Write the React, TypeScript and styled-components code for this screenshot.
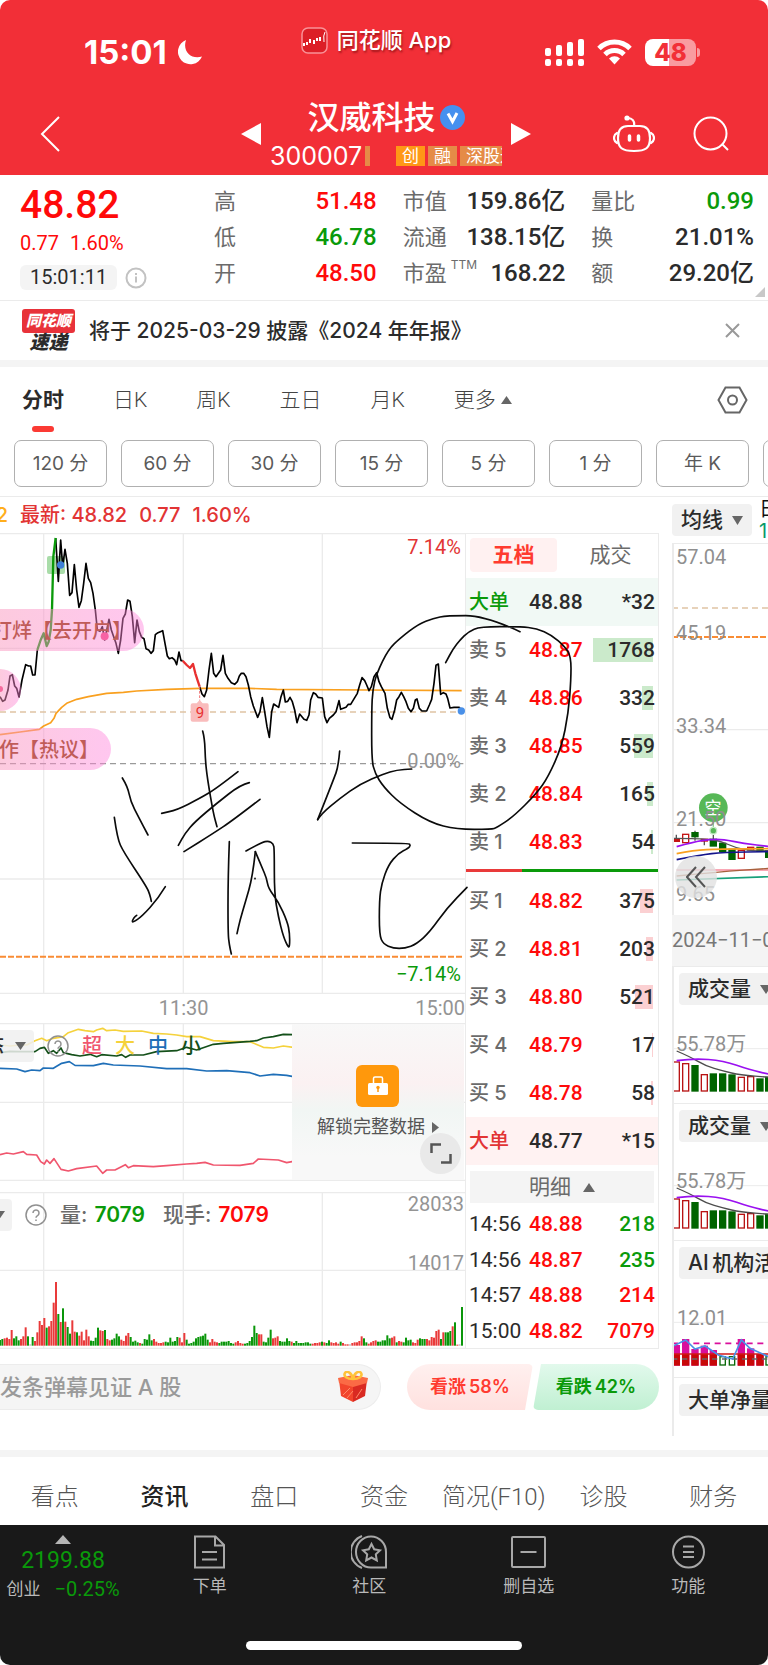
import React from 'react';
import styled, { createGlobalStyle, css } from 'styled-components';

const UI = `Inter, "Noto Sans CJK SC", sans-serif`;
const NUM = `Roboto, "Noto Sans CJK SC", sans-serif`;

const color = {
  brand: '#f22f37',
  up: '#ff0a0a',
  down: '#0a9a0a',
  ink: '#2b2b2b',
  mid: '#6b6b6b',
  soft: '#949494',
  line: '#ebebeb',
  band: '#f4f4f4',
};

const Global = createGlobalStyle`
  * { box-sizing: border-box; }
  body { margin: 0; background: #fff; font-family: ${UI}; color: ${color.ink}; }
  button { border: 0; padding: 0; background: none; font: inherit; color: inherit; cursor: pointer; }
  svg { display: block; flex: none; }
  table { border-collapse: collapse; }
  td, th { padding: 0; font-weight: 400; text-align: left; }
`;

const Page = styled.div`
  border-radius: 10px;
  overflow: hidden;
  background: #fff;
`;

/* ---------- header ---------- */

const Header = styled.header`
  background: ${color.brand};
  color: #fff;
`;

const StatusBar = styled.div`
  display: grid;
  grid-template-columns: 1fr auto 1fr;
  height: 80px;
`;

const StatusSide = styled.div<{ $end?: boolean }>`
  display: flex;
  align-items: center;
  gap: ${p => (p.$end ? 13 : 10)}px;
  justify-content: ${p => (p.$end ? 'flex-end' : 'flex-start')};
  padding: ${p => (p.$end ? '24px 68px 0 0' : '24px 0 0 84px')};
`;

const Clock = styled.span`
  font-size: 33px;
  line-height: 36px;
  font-weight: 700;
`;

const AppName = styled.div`
  display: flex;
  align-items: center;
  gap: 9px;
  padding-right: 16px;
  font-size: 22px;
  line-height: 28px;
  font-weight: 500;
  text-shadow: 1px 2px 2px rgba(90, 0, 0, 0.5);
  white-space: nowrap;
`;

const Battery = styled.div`
  position: relative;
  width: 51px;
  height: 27px;
  margin-right: 4px;
  border-radius: 8px;
  background: linear-gradient(90deg, #fff 48%, #f99ba0 48%);
  color: ${color.brand};
  font-size: 24px;
  line-height: 27px;
  font-weight: 800;
  text-align: center;
  &::after {
    content: '';
    position: absolute;
    right: -4px;
    top: 9px;
    width: 3px;
    height: 9px;
    border-radius: 0 3px 3px 0;
    background: #f99ba0;
  }
`;

const TitleBar = styled.div`
  display: grid;
  grid-template-columns: 1fr auto 1fr;
  align-items: center;
  height: 95px;
  padding-top: 12px;
`;

const BackButton = styled.button`
  justify-self: start;
  margin-left: 40px;
`;

const Switcher = styled.div`
  display: flex;
  align-items: center;
  gap: 9px;
  padding-left: 4px;
`;

const TitleColumn = styled.div`
  display: flex;
  flex-direction: column;
  gap: 8px;
  width: 232px;
`;

const StockName = styled.h1`
  display: flex;
  align-items: center;
  justify-content: center;
  gap: 4px;
  margin: 0;
  font-size: 32px;
  line-height: 36px;
  font-weight: 500;
`;

const CodeLine = styled.div`
  display: flex;
  align-items: center;
  gap: 3px;
  height: 24px;
  font-size: 25px;
  line-height: 24px;
`;

const Sliver = styled.span`
  width: 5px;
  height: 20px;
  background: #e58b47;
`;

const Tags = styled.div`
  display: flex;
  gap: 3px;
  width: 106px;
  margin-left: auto;
  padding-right: 2px;
  overflow: hidden;
`;

const Tag = styled.span<{ $bright?: boolean }>`
  flex: none;
  padding: 0 6px;
  background: ${p => (p.$bright ? '#ff9716' : '#e58b47')};
  font-size: 17px;
  line-height: 20px;
`;

const HeadActions = styled.div`
  display: flex;
  align-items: center;
  justify-content: flex-end;
  gap: 38px;
  padding-right: 39px;
`;

/* ---------- quote ---------- */

const Quote = styled.section`
  position: relative;
  display: grid;
  grid-template-columns: 194px 1fr;
  padding: 0 14px 0 20px;
  height: 126px;
  border-bottom: 1px solid ${color.line};
`;

const PriceBlock = styled.div`
  font-family: ${NUM};
  color: ${color.up};
`;

const Price = styled.div`
  margin-top: 6px;
  font-size: 39px;
  line-height: 48px;
  font-weight: 500;
`;

const Change = styled.div`
  display: flex;
  gap: 11px;
  font-size: 20px;
  line-height: 28px;
`;

const TimeLine = styled.div`
  display: flex;
  align-items: center;
  gap: 8px;
  margin-top: 8px;
`;

const TimePill = styled.time`
  padding: 0 10px;
  border-radius: 6px;
  background: ${color.band};
  color: ${color.ink};
  font-size: 20px;
  line-height: 25px;
`;

const Stats = styled.dl`
  display: grid;
  grid-template-columns: repeat(3, 1fr);
  grid-auto-rows: 36px;
  column-gap: 26px;
  margin: 0;
  padding-top: 8px;
`;

const Stat = styled.div`
  display: flex;
  justify-content: space-between;
  line-height: 36px;
  white-space: nowrap;
`;

const StatName = styled.dt`
  font-size: 22px;
  color: ${color.mid};
  sup { margin-left: 4px; font-size: 12px; line-height: 12px; vertical-align: 12px; }
`;

const StatValue = styled.dd<{ $c?: string }>`
  margin: 0;
  font-family: ${NUM};
  font-size: 24px;
  font-weight: 500;
  color: ${p => p.$c || color.ink};
`;

const Corner = styled.svg`
  position: absolute;
  right: 3px;
  bottom: 3px;
`;

/* ---------- notice ---------- */

const Notice = styled.section`
  display: flex;
  align-items: center;
  gap: 14px;
  height: 59px;
  padding: 0 28px 0 22px;
`;

const NoticeText = styled.p`
  flex: 1;
  margin: 0;
  font-size: 21px;
  line-height: 28px;
  font-weight: 500;
`;

const Express = styled.div`
  width: 53px;
  text-align: center;
  font-style: italic;
  font-weight: 900;
`;

const ExpressTop = styled.div`
  border-radius: 3px;
  background: #e8323a;
  color: #fff;
  font-size: 15px;
  line-height: 24px;
`;

const ExpressBottom = styled.div`
  font-size: 19px;
  line-height: 20px;
`;

const Band = styled.div`
  height: 7px;
  background: ${color.band};
`;

/* ---------- period tabs ---------- */

const Periods = styled.nav`
  display: flex;
  align-items: center;
  gap: 49px;
  height: 66px;
  padding: 0 20px 0 22px;
`;

const PeriodTab = styled.button<{ $on?: boolean }>`
  position: relative;
  display: flex;
  align-items: center;
  gap: 5px;
  height: 66px;
  font-family: ${NUM};
  font-size: 21px;
  line-height: 28px;
  font-weight: ${p => (p.$on ? 700 : 300)};
  color: ${p => (p.$on ? color.ink : '#444')};
  white-space: nowrap;
  ${p => p.$on && css`
    &::after {
      content: '';
      position: absolute;
      left: 10px;
      right: 10px;
      bottom: 1px;
      height: 6px;
      border-radius: 3px;
      background: #fb3a34;
    }
  `}
`;

const SettingsButton = styled.button`
  margin-left: auto;
`;

const Chips = styled.div`
  display: flex;
  gap: 14px;
  height: 64px;
  padding: 7px 0 0 14px;
  border-bottom: 1px solid ${color.line};
  overflow: hidden;
`;

const Chip = styled.button`
  flex: none;
  width: 93px;
  height: 47px;
  border: 1px solid #b0b0b0;
  border-radius: 7px;
  font-size: 19px;
  line-height: 28px;
  color: #5a5a5a;
`;

/* ---------- trading area ---------- */

const Trading = styled.main`
  display: grid;
  grid-template-columns: minmax(0, 1fr) 96px;
  gap: 13px;
  height: 953px;
`;

const Latest = styled.div`
  display: flex;
  gap: 12px;
  height: 36px;
  font-size: 20px;
  line-height: 36px;
  font-weight: 500;
  color: #e23434;
  span:first-child { width: 8px; direction: rtl; overflow: hidden; color: #ffae1c; }
`;

const Board = styled.div`
  position: relative;
  display: grid;
  grid-template-columns: minmax(0, 1fr) 194px;
`;

const ChartColumn = styled.div`
  display: flex;
  flex-direction: column;
`;

const ChartBox = styled.div<{ $h: number }>`
  position: relative;
  height: ${p => p.$h}px;
  overflow: hidden;
  & > svg { width: 100%; height: 100%; }
`;

const AxisLabel = styled.span<{ $top: number; $c?: string; $edge?: number }>`
  position: absolute;
  right: ${p => p.$edge ?? 4}px;
  top: ${p => p.$top}px;
  font-family: ${NUM};
  font-size: 20px;
  line-height: 24px;
  color: ${p => p.$c || color.soft};
`;

const TimeAxis = styled.div`
  display: grid;
  grid-template-columns: 79% 1fr;
  font-family: ${NUM};
  font-size: 20px;
  line-height: 29px;
  color: ${color.soft};
  span:first-child { text-align: center; }
  span:last-child { text-align: right; }
`;

const Bullet = styled.div<{ $top: number; $w: number }>`
  position: absolute;
  left: 0;
  top: ${p => p.$top}px;
  display: flex;
  justify-content: flex-end;
  width: ${p => p.$w}px;
  height: 42px;
  padding-right: 12px;
  border-radius: 0 21px 21px 0;
  background: linear-gradient(90deg, rgba(250, 150, 190, 0.5), rgba(255, 130, 220, 0.45));
  font-size: 20px;
  line-height: 44px;
  font-weight: 500;
  color: #c05c58;
  white-space: nowrap;
  overflow: hidden;
`;

const Legend = styled.div<{ $gap: number }>`
  position: absolute;
  left: 0;
  top: 7px;
  display: flex;
  align-items: center;
  gap: ${p => p.$gap}px;
  height: 32px;
  font-size: 20px;
  line-height: 32px;
  white-space: nowrap;
`;

const LegendPill = styled.button<{ $w: number }>`
  display: flex;
  align-items: center;
  justify-content: flex-end;
  gap: 11px;
  width: ${p => p.$w}px;
  height: 32px;
  padding-right: ${p => (p.$w > 20 ? 8 : 7)}px;
  border-radius: 0 4px 4px 0;
  background: rgba(240, 240, 240, 0.85);
  font-weight: 500;
  overflow: hidden;
`;

const Key = styled.span<{ $c: string }>`
  width: 20px;
  color: ${p => p.$c};
  font-weight: 500;
`;

const Figure = styled.span<{ $c: string }>`
  display: flex;
  gap: 7px;
  margin-right: 5px;
  color: ${color.mid};
  font-size: 21px;
  font-weight: 500;
  b { color: ${p => p.$c}; font-weight: 600; }
`;

const Locked = styled.div`
  position: absolute;
  top: 1px;
  right: 1px;
  bottom: 1px;
  width: 37%;
  display: flex;
  flex-direction: column;
  align-items: center;
  gap: 8px;
  padding-top: 41px;
  background: linear-gradient(180deg, #f8f8f8, #fbf1f2 38%, #f1f6f4 55%, #f8f8f8 85%);
`;

const LockTile = styled.span`
  display: grid;
  place-items: center;
  width: 43px;
  height: 42px;
  border-radius: 6px;
  background: #ff980c;
`;

const Unlock = styled.button`
  display: flex;
  align-items: center;
  gap: 7px;
  font-size: 18px;
  line-height: 24px;
  color: #555;
  white-space: nowrap;
`;

const Expand = styled.button`
  position: absolute;
  right: 4px;
  bottom: 7px;
  display: grid;
  place-items: center;
  width: 41px;
  height: 41px;
  border-radius: 50%;
  background: #e9e9e9;
`;

const Spacer = styled.div`
  height: 11px;
`;

const Ink = styled.svg`
  position: absolute;
  left: 0;
  top: 0;
  width: 100%;
  height: 461px;
  overflow: visible;
  pointer-events: none;
`;

/* ---------- order book ---------- */

const Book = styled.section`
  border: 1px solid ${color.line};
`;

const BookTabs = styled.div`
  display: grid;
  grid-template-columns: 1fr 1fr;
  gap: 10px;
  padding: 4px 4px 6px;
`;

const BookTab = styled.button<{ $on?: boolean }>`
  height: 34px;
  border-radius: 4px;
  background: ${p => (p.$on ? '#fff1f1' : 'none')};
  color: ${p => (p.$on ? '#ff3b30' : color.mid)};
  font-size: 21px;
  line-height: 34px;
  font-weight: ${p => (p.$on ? 700 : 400)};
`;

const BookTable = styled.table`
  width: 100%;
  table-layout: fixed;
  font-family: ${NUM};
  font-size: 21px;
  line-height: 24px;
`;

const BookRow = styled.tr<{ $bg?: string; $h: number }>`
  height: ${p => p.$h}px;
  background: ${p => p.$bg || 'none'};
`;

const LevelName = styled.th<{ $c?: string }>`
  width: 63px;
  padding-left: 3px;
  font-family: ${UI};
  font-size: 20px;
  font-weight: 500;
  color: ${p => p.$c || color.mid};
  white-space: nowrap;
`;

const TimeCell = styled.th`
  width: 63px;
  padding-left: 3px;
`;

const PriceCell = styled.td<{ $c: string }>`
  width: 56px;
  color: ${p => p.$c};
  font-weight: 500;
`;

const QtyCell = styled.td<{ $c?: string }>`
  padding-right: 3px;
  text-align: right;
  font-weight: 500;
  color: ${p => p.$c || color.ink};
`;

const QtyBar = styled.span<{ $w: number; $c: string }>`
  display: block;
  margin-right: 2px;
  background: linear-gradient(${p => p.$c}, ${p => p.$c}) right / ${p => p.$w}px 100% no-repeat;
  span { margin-right: -2px; }
`;

const Ratio = styled.div`
  height: 3px;
  margin: 3px 0 5px;
  background: linear-gradient(90deg, #e93a3a 29%, #0a9a0a 29%);
`;

const DetailButton = styled.button`
  display: flex;
  align-items: center;
  justify-content: center;
  gap: 12px;
  width: calc(100% - 8px);
  height: 32px;
  margin: 6px 4px 3px;
  background: ${color.band};
  color: ${color.mid};
  font-size: 21px;
  line-height: 32px;
`;

/* ---------- comment bar ---------- */

const CommentBar = styled.div`
  display: grid;
  grid-template-columns: minmax(0, 1fr) 252px;
  gap: 26px;
  padding: 15px 0 0;
`;

const CommentBox = styled.label`
  display: flex;
  align-items: center;
  height: 46px;
  padding-right: 12px;
  border: 1px solid #ececec;
  border-left: 0;
  border-radius: 0 23px 23px 0;
  background: #f5f5f5;
`;

const CommentInput = styled.input`
  flex: 1;
  min-width: 0;
  padding: 0;
  border: 0;
  outline: 0;
  background: none;
  font-family: ${UI};
  font-size: 22px;
  line-height: 28px;
  font-weight: 500;
  &::placeholder { color: #9a9a9a; opacity: 1; }
`;

const Votes = styled.div`
  display: grid;
  grid-template-columns: 1fr 1fr;
`;

const Vote = styled.button<{ $up?: boolean }>`
  height: 46px;
  font-size: 18px;
  line-height: 46px;
  font-weight: 600;
  color: ${p => (p.$up ? '#ff3b30' : color.down)};
  background: ${p => (p.$up ? 'linear-gradient(#fff0ef, #ffe1df)' : 'linear-gradient(#e2f9ec, #c0f0d2)')};
  border-radius: ${p => (p.$up ? '23px 5px 5px 23px' : '5px 23px 23px 5px')};
  clip-path: ${p => (p.$up
    ? 'polygon(0 0, 100% 0, calc(100% - 8px) 100%, 0 100%)'
    : 'polygon(8px 0, 100% 0, 100% 100%, 0 100%)')};
`;

/* ---------- right column ---------- */

const SideHead = styled.div`
  display: flex;
  align-items: center;
  gap: 7px;
  height: 46px;
  overflow: hidden;
`;

const Picker = styled.button`
  flex: none;
  display: flex;
  align-items: center;
  gap: 9px;
  height: 32px;
  padding: 0 9px;
  border-radius: 4px;
  background: #f1f1f1;
  font-size: 21px;
  line-height: 32px;
  font-weight: 500;
  white-space: nowrap;
`;

const SideText = styled.div`
  font-size: 20px;
  line-height: 22px;
  color: #111;
  b { display: block; font-weight: 400; color: #0a9a6a; }
`;

const SidePanel = styled.div<{ $h: number }>`
  position: relative;
  height: ${p => p.$h}px;
  border-top: 1px solid ${color.line};
  border-left: 2px solid ${color.line};
  overflow: hidden;
  ${Picker} { margin: 6px 0 0 5px; }
`;

const DateBand = styled.div`
  height: 51px;
  background: ${color.band};
  font-family: ${NUM};
  font-size: 20px;
  line-height: 50px;
  color: #777;
  white-space: nowrap;
  overflow: hidden;
`;

const Collapse = styled.button`
  position: absolute;
  left: 1px;
  bottom: 17px;
  display: grid;
  place-items: center;
  width: 42px;
  height: 42px;
  border-radius: 50%;
  background: rgba(225, 225, 225, 0.8);
`;

/* ---------- bottom ---------- */

const Sections = styled.nav`
  display: grid;
  grid-template-columns: repeat(7, 1fr);
  height: 68px;
`;

const SectionLink = styled.a<{ $on?: boolean }>`
  padding-top: 13px;
  text-align: center;
  text-decoration: none;
  font-family: ${NUM};
  font-size: 24px;
  line-height: 55px;
  font-weight: ${p => (p.$on ? 500 : 300)};
  color: ${p => (p.$on ? '#222' : '#555')};
  white-space: nowrap;
`;

const Dock = styled.footer`
  background: #191919;
  color: #b9b9b9;
  height: 140px;
  display: flex;
  flex-direction: column;
  justify-content: space-between;
  align-items: center;
  padding-bottom: 15px;
`;

const DockRow = styled.div`
  display: grid;
  grid-template-columns: 130px repeat(4, 1fr);
  width: 100%;
`;

const IndexBox = styled.button`
  display: flex;
  flex-direction: column;
  align-items: center;
  padding: 10px 4px 0 0;
  font-family: ${NUM};
  color: ${color.down};
  strong { margin-top: 3px; font-size: 23px; line-height: 28px; font-weight: 400; }
`;

const IndexLine = styled.span`
  display: flex;
  align-items: center;
  gap: 14px;
  margin-top: 2px;
  font-size: 20px;
  line-height: 24px;
  em { font-style: normal; font-size: 17px; color: #b9b9b9; }
`;

const DockItem = styled.a`
  display: flex;
  flex-direction: column;
  align-items: center;
  gap: 5px;
  padding-top: 10px;
  color: inherit;
  text-decoration: none;
  font-size: 17px;
  line-height: 24px;
`;

const HomeBar = styled.div`
  width: 36%;
  height: 9px;
  border-radius: 5px;
  background: #fff;
`;

/* ---------- drawings ---------- */

type Dir = 'up' | 'down' | 'left' | 'right';
const TRI: Record<Dir, string> = {
  up: 'M5 0 10 9H0z',
  down: 'M0 0H10L5 9z',
  left: 'M10 0V10L0 5z',
  right: 'M0 0V10L10 5z',
};
const Tri = ({ d, w = 10, h = 9, c = '#666' }: { d: Dir; w?: number; h?: number; c?: string }) => (
  <svg width={w} height={h} viewBox={d === 'left' || d === 'right' ? '0 0 10 10' : '0 0 10 9'} preserveAspectRatio="none">
    <path d={TRI[d]} fill={c} />
  </svg>
);

const Help = () => (
  <svg width="22" height="22" viewBox="0 0 22 22" fill="none" stroke="#909090" strokeWidth="1.5">
    <circle cx="11" cy="11" r="10" />
    <path d="M8 9a3 3 0 1 1 4.500 2.600C11.400 12.200 11 12.700 11 13.800M11 15.500v1.600" />
  </svg>
);

const parse = (s: string) => s.trim().split(/\s+/).map(p => p.split(',').map(Number));

/* Rounds a hand-drawn stroke by running curves through its midpoints. */
const smooth = (s: string) => {
  const p = parse(s);
  let d = `M${p[0]}`;
  for (let i = 1; i < p.length - 1; i++) {
    d += `Q${p[i]} ${(p[i][0] + p[i + 1][0]) / 2},${(p[i][1] + p[i + 1][1]) / 2}`;
  }
  return `${d}L${p[p.length - 1]}`;
};

const PRICE_A = '0,500 8,514 15,510 24,480 30,438 37,434 44,468 50,475 57,501 66,450 77,404 86,408 92,408 98,435 105,435 112,360';
const PRICE_RISE = '112,360 122,330 131,310 140,348 146,335 152,300 156,240 160,80 167,24';
const PRICE_B = `167,24 175,154 182,30 188,110 195,58 202,100 209,196 216,188 223,104 230,180 237,232 244,212 251,160 258,100 265,145 272,158
 279,190 286,240 292,300 300,304 307,290 314,330 327,268 334,300 341,320 348,340 355,370 362,330 369,265 376,252 383,210 390,214 397,260 404,338
 411,270 418,305 425,322 432,326 438,356 446,360 453,370 460,362 466,314 474,308 488,302 495,340 502,378 508,386 516,383 524,390 530,404 537,366 543,392 548,392`;
const PRICE_FALL = '548,392 560,405 570,414 579,402 586,430 593,452 599,470';
const PRICE_C = `599,470 606,492 613,500 620,480 627,420 634,370 641,430 648,440 662,420 669,376 676,430 684,445 694,458 704,463 712,455 718,438 724,430
 731,430 738,440 745,465 752,500 760,528 773,562 780,545 787,503 794,545 801,590 808,622 815,545 821,522 836,532 843,500 850,480 856,516 863,514
 870,502 877,515 884,540 891,578 899,552 912,568 920,571 927,555 932,510 940,488 947,492 954,502 967,504 974,560 981,578 988,565 1000,555 1008,545
 1017,512 1022,538 1038,532 1045,523 1052,523 1072,490 1079,465 1086,443 1094,452 1100,465 1107,482 1114,470 1122,440 1130,428 1137,455 1144,470
 1155,490 1162,535 1170,563 1176,568 1184,540 1190,510 1197,500 1204,487 1211,500 1218,515 1225,535 1233,545 1240,535 1246,510 1251,507 1258,535
 1266,543 1280,543 1288,525 1295,508 1302,460 1308,406 1315,402 1322,493 1330,488 1338,492 1343,505 1350,534 1362,532 1378,532 1384,542`;
const AVERAGE = `0,614 60,606 118,598 131,588 152,578 162,565 168,550 185,532 200,520 230,508 265,500 320,490 370,487 410,483 500,478 600,475
 750,475 830,478 1100,480 1385,482`;

const STROKES = [
  `1560,305 1455,257 1340,257 1300,265 1255,282 1200,325 1165,358 1130,430 1118,480 1115,540 1115,690 1125,730 1150,770 1200,820 1290,878 1370,898
   1475,898 1490,893 1540,860 1610,790 1645,740 1685,650 1705,550 1713,450 1713,380 1695,350 1655,315 1610,295 1560,290 1440,290 1405,305 1380,330 1360,355 1337,398`,
  '608,603 614,625 616,690 622,745 640,850 651,890',
  '714,725 650,775 600,805 530,840 485,850',
  '748,758 722,764 650,820 585,875 555,910 535,946',
  '780,808 700,870 640,910 552,965',
  '367,744 383,770 392,815 415,860 444,915',
  '343,862 352,925 370,965 440,1070 450,1095 454,1114',
  '496,1070 475,1105 425,1160 400,1176 396,1175 402,1162 410,1156',
  '688,935 684,1040 684,1210 688,1245 694,1272',
  '738,963 785,937 805,933 820,940 823,960 823,1090 835,1160 850,1220 865,1253 869,1248 869,1210 862,1175 835,1115 805,1075 800,1045 785,1010 766,965',
  '766,965 758,1040 735,1120 720,1170 711,1211',
  '1019,663 1015,710 1000,750 953,869',
  '953,869 965,850 1020,805 1080,762 1150,732 1190,720 1235,717',
  '1057,939 1225,939 1232,946 1225,955 1195,970 1165,1005 1145,1060 1138,1110 1138,1215 1150,1242 1180,1255 1215,1255 1250,1242 1290,1205 1340,1135 1401,1072',
];

/* Minute volumes: positive closes up, negative closes down, 0 means flat. */
const VOLUMES = [
  -17, -20, 22, 24, 20, 47, -22, -28, -16, 20, 28, 55, -28, 0, -26, 14, 40, 74, 62, 83, -54, 58, 74, 129, 191, -95, 71, -112, 72, -56, -36, 76, 42, -40, 30, 42,
  16, 48, 28, -15, -14, -24, -54, 46, 44, -47, 20, 16, -18, -22, -36, -28, 18, 14, 30, 38, -26, -12, -15, -10, 8, -6, -20, -18, -34, -16, 20, 12, 8, 8, 10,
  -12, -10, -24, -12, -14, -26, 24, 10, 38, -18, -6, -8, -12, -22, -26, -28, -30, -36, -18, 10, 20, 12, 10, -8, -12, -12, -12, -14, -8, -6, 10, 14, 8, 6, -6,
  -8, -14, -26, -60, -38, 34, 34, -12, -10, -24, -48, 22, 24, 28, -14, -12, -12, -22, -14, 12, -8, -14, -8, -8, -8, -10, -10, -6, 6, 8, 8, 10, -12, 10, -8,
  -16, 10, 8, 10, 6, -12, 8, 4, 4, 0, 8, 10, 10, 14, 28, -22, -10, 6, 10, 14, 16, -12, -12, -16, -16, -31, -22, 24, 28, -10, 14, 12, -10, -24, -16, -18, 10,
  8, 18, -22, -20, -20, 20, 16, 26, 24, 44, 48, -20, 40, -40, -40, -44, 58, -70, 3, 0, -116,
];

const CANDLES: [number, number, number, boolean, boolean][] = [
  [649, 1018, 1024, true, true], [677, 1003, 1028, true, false], [705, 998, 1010, false, true], [733, 1018, 1023, true, true],
  [760, 1018, 1038, false, true], [788, 1030, 1055, false, true], [816, 1048, 1078, false, true], [844, 1051, 1075, true, false],
  [872, 1042, 1050, true, false], [900, 1042, 1054, false, true], [926, 1052, 1072, false, true],
];

const VOL_BARS: [number, number, boolean][] = [
  [649, 516, true], [677, 521, true], [705, 527, false], [733, 554, true], [760, 552, false], [788, 552, false], [816, 555, false],
  [844, 562, true], [872, 560, true], [900, 567, false], [926, 562, false],
];

const AI_BARS: [number, number][] = [
  [649, 315], [677, 297], [705, 327], [733, 317], [760, 330], [844, 297], [872, 325], [900, 342],
];

const SideLabel = styled.text`
  font-family: ${NUM};
  font-size: 20px;
  fill: #8f8f8f;
`;

const SideVolume = () => (
  <SidePanel $h={137}>
    <Picker>成交量 <Tri d="down" w={12} h={9} /></Picker>
    <svg width="94" height="98" viewBox="214 115 94 98">
      <g transform="scale(.33333)" fill="none">
        <path d="M636 476H930" stroke={color.line} strokeWidth="3" />
        {VOL_BARS.map(([x, y, up]) => (
          <rect key={x} x={x - 9} y={y} width="18" height={603 - y} fill={up ? '#fff' : '#006400'} stroke={up ? '#b81414' : '#006400'} strokeWidth="4" />
        ))}
        <path d={smooth('650,483 690,500 735,527 790,543 840,555 930,562')} stroke="#4d4d4d" strokeWidth="4" />
        <path d={smooth('650,512 700,505 790,512 870,540 930,553')} stroke="#9a10f0" strokeWidth="5" />
      </g>
      <SideLabel x="216" y="161">55.78万</SideLabel>
    </svg>
  </SidePanel>
);

const stats: [React.ReactNode, string, string?][] = [
  ['高', '51.48', color.up], ['市值', '159.86亿'], ['量比', '0.99', color.down],
  ['低', '46.78', color.down], ['流通', '138.15亿'], ['换', '21.01%'],
  ['开', '48.50', color.up], [<>市盈<sup>TTM</sup></>, '168.22'], ['额', '29.20亿'],
];

const asks: [string, string, string, number][] = [
  ['卖 5', '48.87', '1768', 60], ['卖 4', '48.86', '332', 11], ['卖 3', '48.85', '559', 19], ['卖 2', '48.84', '165', 6], ['卖 1', '48.83', '54', 2],
];
const bids: [string, string, string, number][] = [
  ['买 1', '48.82', '375', 13], ['买 2', '48.81', '203', 7], ['买 3', '48.80', '521', 18], ['买 4', '48.79', '17', 1], ['买 5', '48.78', '58', 2],
];
const trades: [string, string, string, string][] = [
  ['14:56', '48.88', '218', color.down], ['14:56', '48.87', '235', color.down], ['14:57', '48.88', '214', color.up], ['15:00', '48.82', '7079', color.up],
];

const Levels = ({ rows, tint }: { rows: typeof asks; tint: string }) => (
  <>
    {rows.map(([name, price, qty, w]) => (
      <BookRow key={name} $h={48}>
        <LevelName scope="row">{name}</LevelName>
        <PriceCell $c={color.up}>{price}</PriceCell>
        <QtyCell><QtyBar $w={w} $c={tint}><span>{qty}</span></QtyBar></QtyCell>
      </BookRow>
    ))}
  </>
);

const dockIcon = { width: 37, height: 34, viewBox: '0 0 37 34', fill: 'none', stroke: '#a8a8a8', strokeWidth: 2 } as const;

export default function App() {
  return (
    <Page>
      <Global />
      <Header>
        <StatusBar>
          <StatusSide>
            <Clock>15:01</Clock>
            <svg width="25" height="25" viewBox="0 0 25 25"><path d="M9 0A12.500 12.500 0 1 0 25 16.500 C15 20 5 12 9 0Z" fill="#fff" /></svg>
          </StatusSide>
          <AppName>
            <svg width="27" height="27" viewBox="0 0 27 27" fill="none">
              <rect x="1" y="1" width="25" height="25" rx="6" fill="#dc1f27" stroke="#f99298" strokeWidth="1.500" />
              <path d="M3 16v3M6 15v3M9 12v4M13 13v4M16 11v3M19 10v4" stroke="#fff" strokeWidth="2" />
              <path d="M24 5q-2 3-1 10" stroke="#fff" />
            </svg>
            同花顺 App
          </AppName>
          <StatusSide $end>
            <svg width="39" height="27" viewBox="0 0 39 27" fill="#fff">
              <rect x="0" y="9" width="6" height="8" rx="2" /><rect x="11" y="6" width="6" height="11" rx="2" />
              <rect x="22" y="3" width="6" height="14" rx="2" /><rect x="33" y="0" width="6" height="17" rx="2" />
              {[0, 11, 22, 33].map(x => <rect key={x} x={x} y="20" width="6" height="7" rx="2" />)}
            </svg>
            <svg width="35" height="26" viewBox="0 0 35 26" fill="none" stroke="#fff" strokeWidth="5">
              <path d="M2 9.500a22 22 0 0 1 31 0M8 15.500a13.500 13.500 0 0 1 19 0" />
              <path d="M12 19.500a8 8 0 0 1 11 0L17.500 25.500z" fill="#fff" stroke="none" />
            </svg>
            <Battery>48</Battery>
          </StatusSide>
        </StatusBar>
        <TitleBar>
          <BackButton aria-label="返回">
            <svg width="20" height="36" viewBox="0 0 20 36" fill="none" stroke="#fff" strokeWidth="2"><path d="M19 1 2 18 19 35" /></svg>
          </BackButton>
          <Switcher>
            <button aria-label="上一只"><Tri d="left" w={20} h={22} c="#fff" /></button>
            <TitleColumn>
              <StockName>
                汉威科技
                <svg width="25" height="25" viewBox="0 0 25 25"><circle cx="12.500" cy="12.500" r="12.500" fill="#4690ef" /><path d="M8 8.500 12.500 16.500 17 8" fill="none" stroke="#fff" strokeWidth="3" /></svg>
              </StockName>
              <CodeLine>
                <span>300007</span>
                <Sliver />
                <Tags><Tag $bright>创</Tag><Tag>融</Tag><Tag>深股通</Tag></Tags>
              </CodeLine>
            </TitleColumn>
            <button aria-label="下一只"><Tri d="right" w={20} h={22} c="#fff" /></button>
          </Switcher>
          <HeadActions>
            <button aria-label="助手">
              <svg width="42" height="38" viewBox="0 0 42 38" fill="none" stroke="#fff" strokeWidth="2.200" strokeLinecap="round">
                <path d="M15 11h12c7 0 10 5 10 12 0 10-4 13-16 13S5 33 5 23C5 16 8 11 15 11z" />
                <path d="M4 18c-4 2-4 8 0 10M38 18c4 2 4 8 0 10M21 11c1-5-2-8-6-8" />
                <circle cx="14" cy="3" r="1.500" fill="#fff" />
                <path d="M16.500 21v4M25.500 21v4" strokeWidth="3.500" />
              </svg>
            </button>
            <button aria-label="搜索">
              <svg width="36" height="36" viewBox="0 0 36 36" fill="none" stroke="#fff" strokeWidth="2"><circle cx="17.500" cy="17.500" r="16" /><path d="M29 28l6 6" /></svg>
            </button>
          </HeadActions>
        </TitleBar>
      </Header>

      <Quote>
        <PriceBlock>
          <Price>48.82</Price>
          <Change><span>0.77</span><span>1.60%</span></Change>
          <TimeLine>
            <TimePill>15:01:11</TimePill>
            <svg width="22" height="22" viewBox="0 0 22 22" fill="none" stroke="#c2c2c2" strokeWidth="2"><circle cx="11" cy="11" r="9.500" /><path d="M11 9.500v6M11 6v2" /></svg>
          </TimeLine>
        </PriceBlock>
        <Stats>
          {stats.map(([name, value, c], i) => (
            <Stat key={i}><StatName>{name}</StatName><StatValue $c={c}>{value}</StatValue></Stat>
          ))}
        </Stats>
        <Corner width="10" height="10" viewBox="0 0 10 10"><path d="M10 0V10H0z" fill="#c8c8c8" /></Corner>
      </Quote>

      <Notice>
        <Express><ExpressTop>同花顺</ExpressTop><ExpressBottom>速递</ExpressBottom></Express>
        <NoticeText>将于 2025-03-29 披露《2024 年年报》</NoticeText>
        <button aria-label="关闭">
          <svg width="15" height="15" viewBox="0 0 15 15" stroke="#999" strokeWidth="2"><path d="M1 1l13 13M14 1 1 14" /></svg>
        </button>
      </Notice>
      <Band />

      <Periods>
        <PeriodTab $on>分时</PeriodTab>
        <PeriodTab>日K</PeriodTab>
        <PeriodTab>周K</PeriodTab>
        <PeriodTab>五日</PeriodTab>
        <PeriodTab>月K</PeriodTab>
        <PeriodTab>更多<Tri d="up" w={11} h={8} /></PeriodTab>
        <SettingsButton aria-label="设置">
          <svg width="31" height="28" viewBox="0 0 31 28" fill="none" stroke="#666" strokeWidth="2"><path d="M8.500 1.500h14L29.500 14l-7 12.500h-14L1.500 14z" /><circle cx="15.500" cy="14" r="4.500" /></svg>
        </SettingsButton>
      </Periods>
      <Chips>
        {['120 分', '60 分', '30 分', '15 分', '5 分', '1 分', '年 K', ''].map(t => <Chip key={t} aria-label={t || '更多周期'}>{t}</Chip>)}
      </Chips>

      <Trading>
        <div>
          <Latest><span>2</span><span>最新: 48.82</span><span>0.77</span><span>1.60%</span></Latest>
          <Board>
            <ChartColumn>
              <ChartBox $h={461}>
                <svg viewBox="0 9 1395 1383" preserveAspectRatio="none" fill="none" strokeLinejoin="round">
                  <path d="M0 11H1395M0 355H1395M0 1047H1395M0 1390H1395M131 9V1392M550 9V1392M967 9V1392" stroke={color.line} strokeWidth="4" />
                  <path d="M0 546H1385" stroke="#e0c4a4" strokeWidth="5" strokeDasharray="18 12" />
                  <path d="M0 701H1390" stroke="#9a9a9a" strokeWidth="4" strokeDasharray="18 12" />
                  <path d="M0 1280H1390" stroke="#f98c34" strokeWidth="6" strokeDasharray="18 6" />
                  <polyline points={AVERAGE} stroke="#f9a01f" strokeWidth="5" />
                  <rect x="141" y="78" width="54" height="54" rx="6" fill="#0a9a0a" opacity=".35" />
                  <g stroke="#000" strokeWidth="5">
                    <polyline points={PRICE_A} /><polyline points={PRICE_B} /><polyline points={PRICE_C} />
                  </g>
                  <polyline points={PRICE_RISE} stroke="#0a9a0a" strokeWidth="7" />
                  <polyline points={PRICE_FALL} stroke="#e83030" strokeWidth="7" />
                  <circle cx="182" cy="105" r="11" fill="#3f80d8" />
                  <circle cx="0" cy="477" r="9" fill="#f0407a" />
                  <circle cx="314" cy="319" r="12" fill="#f0407a" />
                  <circle cx="1384" cy="543" r="11" fill="#4a90e8" />
                  <path d="M599 470V512" stroke="#f07070" strokeWidth="3" strokeDasharray="8 5" />
                  <path d="M590 520 599 510 608 520H622Q626 520 626 526V570Q626 575 620 575H578Q572 575 572 570V526Q572 520 578 520Z" fill="#f9bcbc" />
                  <text x="587" y="564" fontFamily={NUM} fontSize="45" fill="#e83030">9</text>
                </svg>
                <Bullet $top={76} $w={144}>打烊【去开户】</Bullet>
                <Bullet $top={136} $w={21} />
                <Bullet $top={195} $w={111}>作【热议】</Bullet>
                <AxisLabel $top={2} $c="#e23434">7.14%</AxisLabel>
                <AxisLabel $top={216}>0.00%</AxisLabel>
                <AxisLabel $top={429} $c={color.down}>−7.14%</AxisLabel>
              </ChartBox>
              <TimeAxis><span>11:30</span><span>15:00</span></TimeAxis>
              <ChartBox $h={158}>
                <svg viewBox="0 9 1395 474" preserveAspectRatio="none" fill="none" strokeWidth="5" strokeLinejoin="round">
                  <path d="M0 11H1395M0 247H1395M0 481H1395M131 9V482M550 9V482" stroke={color.line} strokeWidth="4" />
                  <polyline stroke="#f5d23c" points="0,75 30,78 60,75 80,75 105,62 125,55 140,62 160,55 190,50 205,38 235,28 255,32 280,35 290,30 308,25 320,32 345,30 370,34 425,33 460,40 500,42 530,45 560,50 600,50 640,62 700,65 750,65 790,82 820,84 850,78 880,82" />
                  <polyline stroke="#14501a" points="0,98 30,94 60,95 105,95 120,85 133,82 145,100 160,92 170,100 183,84 190,98 215,104 240,108 270,103 290,110 305,104 350,108 365,104 377,112 390,105 430,105 470,95 530,92 560,82 590,90 640,73 670,70 750,64 770,62 790,54 820,50 850,43 880,44" />
                  <polyline stroke="#1f6fb8" points="0,145 50,147 75,155 95,150 120,152 130,144 160,145 185,130 208,125 225,136 280,137 310,130 340,135 420,138 500,146 560,146 620,153 680,152 750,158 780,168 820,163 860,166 880,170" />
                  <polyline stroke="#f0566e" points="0,404 20,399 40,402 70,395 80,403 110,405 122,425 133,432 140,420 150,430 162,416 183,448 205,453 230,446 290,438 308,460 320,450 345,450 376,434 385,443 400,437 460,440 500,437 560,432 590,430 615,427 640,435 720,436 760,430 775,417 835,420 860,428 880,424" />
                </svg>
                <Legend $gap={13}>
                  <LegendPill $w={34}>态<Tri d="down" w={11} h={8} /></LegendPill>
                  <Help />
                  <Key $c="#f0566e">超</Key><Key $c="#f5d23c">大</Key><Key $c="#1f6fb8">中</Key><Key $c="#14501a">小</Key>
                </Legend>
                <Locked>
                  <LockTile>
                    <svg width="20" height="20" viewBox="0 0 20 20" fill="none"><rect x="0" y="7" width="20" height="12" rx="1.500" fill="#fff" /><path d="M5.500 7V2.500Q5.500 1 7 1h6q1.500 0 1.500 1.500V7" stroke="#fff" strokeWidth="1.500" /><circle cx="10" cy="11.500" r="1.700" fill="#ff980c" /><path d="M10 12v4" stroke="#ff980c" strokeWidth="1.500" /></svg>
                  </LockTile>
                  <Unlock>解锁完整数据<Tri d="right" w={7} h={11} /></Unlock>
                </Locked>
                <Expand aria-label="全屏">
                  <svg width="22" height="21" viewBox="0 0 22 21" fill="none" stroke="#555" strokeWidth="2.500"><path d="M1.500 10V1.500H11M20.500 11v8.500H11" /></svg>
                </Expand>
              </ChartBox>
              <Spacer />
              <ChartBox $h={157}>
                <svg viewBox="0 36 1395 471" preserveAspectRatio="none">
                  <path d="M0 38H1395M0 271H1395M0 505H1395M131 36V507M550 36V507M967 36V507" stroke={color.line} strokeWidth="4" />
                  {VOLUMES.map((v, i) => (
                    <rect key={i} x={i * 7 - 3} y={497 - (Math.abs(v) || 4)} width="6" height={Math.abs(v) || 4} fill={v > 0 ? '#e93a3a' : v < 0 ? '#0a960a' : '#bbb'} />
                  ))}
                </svg>
                <Legend $gap={13}>
                  <LegendPill $w={12} aria-label="指标"><Tri d="down" w={11} h={8} /></LegendPill>
                  <Help />
                  <Figure $c={color.down}>量: <b>7079</b></Figure>
                  <Figure $c={color.up}>现手: <b>7079</b></Figure>
                </Legend>
                <AxisLabel $top={0} $edge={1}>28033</AxisLabel>
                <AxisLabel $top={59} $edge={1}>14017</AxisLabel>
              </ChartBox>
            </ChartColumn>

            <Book>
              <BookTabs><BookTab $on>五档</BookTab><BookTab>成交</BookTab></BookTabs>
              <BookTable>
                <tbody>
                  <BookRow $h={48} $bg="#f1f9f5">
                    <LevelName scope="row" $c={color.down}>大单</LevelName><PriceCell $c={color.ink}>48.88</PriceCell><QtyCell>*32</QtyCell>
                  </BookRow>
                  <Levels rows={asks} tint="#cbeacb" />
                </tbody>
              </BookTable>
              <Ratio />
              <BookTable>
                <tbody>
                  <Levels rows={bids} tint="#fbd0d2" />
                  <BookRow $h={48} $bg="#fff2f2">
                    <LevelName scope="row" $c="#e23434">大单</LevelName><PriceCell $c={color.ink}>48.77</PriceCell><QtyCell>*15</QtyCell>
                  </BookRow>
                </tbody>
              </BookTable>
              <DetailButton>明细<Tri d="up" w={12} h={9} /></DetailButton>
              <BookTable>
                <tbody>
                  {trades.map(([t, p, q, c], i) => (
                    <BookRow key={i} $h={i % 2 ? 35 : 36}><TimeCell scope="row">{t}</TimeCell><PriceCell $c={color.up}>{p}</PriceCell><QtyCell $c={c}>{q}</QtyCell></BookRow>
                  ))}
                </tbody>
              </BookTable>
            </Book>

            <Ink viewBox="0 9 1977 1383" preserveAspectRatio="none" fill="none" stroke="#0b0b0b" strokeWidth="5" strokeLinecap="round">
              {STROKES.map(s => <path key={s} d={smooth(s)} />)}
              <path d="M765 1045v1" />
            </Ink>
          </Board>

          <CommentBar>
            <CommentBox>
              <CommentInput aria-label="弹幕" placeholder="发条弹幕见证 A 股" />
              <svg width="30" height="32" viewBox="0 0 30 32">
                <path d="M1 9 15 13v18L3 25z" fill="#f2452c" /><path d="M29 9 15 13v18L27 25z" fill="#d92a22" />
                <path d="M0 7 15 4 30 7 29 12 15 16 1 12z" fill="#fb6a45" />
                <path d="M5 24 12 17M9 27l6-7M18 27l6-9" stroke="#ff8a68" />
                <path d="M15 8C9 8 5 5 7 2s7 0 8 6c1-6 6-9 8-6s-2 6-8 6" fill="none" stroke="#ffc23a" strokeWidth="2.500" />
              </svg>
            </CommentBox>
            <Votes><Vote $up>看涨{'\u2009'}58%</Vote><Vote>看跌{'\u2009'}42%</Vote></Votes>
          </CommentBar>
        </div>

        <aside>
          <SideHead>
            <Picker>均线 <Tri d="down" w={11} h={9} /></Picker>
            <SideText>日<b>1</b></SideText>
          </SideHead>
          <SidePanel $h={372}>
            <svg width="94" height="371" viewBox="214 44 94 371">
              <g transform="scale(.33333)" fill="none" strokeWidth="4">
                <path d="M636 689H930M636 968H930" stroke={color.line} />
                <path d="M636 324H930" stroke="#e0c4a4" strokeWidth="5" strokeDasharray="18 12" />
                <path d="M636 411H930" stroke="#f98c34" strokeWidth="6" strokeDasharray="18 6" />
                <path d="M760 960V985" stroke="#8ed08e" strokeWidth="4" />
                <circle cx="760" cy="923" r="43" fill="#57b857" />
                <circle cx="760" cy="992" r="10" fill="#57b857" stroke="#c4e8c4" />
                <path d="M649 1004v16M705 992v30M733 1020v16M760 1005v15" stroke="#555" />
                {CANDLES.map(([x, a, b, up, full]) => (
                  <rect key={x} x={x - 9} y={a} width="18" height={b - a} fill={full ? (up ? '#c41414' : '#006400') : '#fff'} stroke={up ? '#c41414' : '#006400'} />
                ))}
                <path d={smooth('640,1015 720,1015 780,1022 830,1045 880,1053 930,1052')} stroke="#555" />
                <path d={smooth('650,1040 700,1026 750,1018 790,1018 850,1030 930,1040')} stroke="#9a10f0" strokeWidth="5" />
                <path d={smooth('650,1061 700,1051 780,1047 930,1046')} stroke="#f9a01f" strokeWidth="5" />
                <path d={smooth('650,1079 720,1065 790,1057 930,1055')} stroke="#14148c" strokeWidth="5" />
                <path d="M650 1110H930" stroke="#f78a9c" strokeWidth="5" />
                <path d={smooth('650,1128 770,1116 930,1105')} stroke="#a8603c" />
                <path d="M650 1140 930 1130" stroke="#18a07a" strokeWidth="5" />
              </g>
              <text x="253" y="314" textAnchor="middle" fontSize="17" fontFamily={UI} fill="#fff">空</text>
              <SideLabel x="216" y="64">57.04</SideLabel>
              <SideLabel x="216" y="140">45.19</SideLabel>
              <SideLabel x="216" y="233">33.34</SideLabel>
              <SideLabel x="216" y="326">21.50</SideLabel>
              <SideLabel x="216" y="401">9.65</SideLabel>
            </svg>
            <Collapse aria-label="收起">
              <svg width="20" height="22" viewBox="0 0 20 22" fill="none" stroke="#555" strokeWidth="2"><path d="M10 1 1 11l9 10M19 1l-9 10 9 10" /></svg>
            </Collapse>
          </SidePanel>
          <DateBand>2024−11−01</DateBand>
          <SideVolume />
          <SideVolume />
          <SidePanel $h={137}>
            <Picker>AI{'\u2009'}机构活跃</Picker>
            <svg width="94" height="98" viewBox="214 39 94 98">
              <g transform="scale(.33333)" fill="none">
                <path d="M636 247H930" stroke={color.line} strokeWidth="3" />
                {AI_BARS.map(([x, y]) => (
                  <g key={x}><rect x={x - 11} y={y} width="22" height={377 - y} fill="#d90f9c" /><rect x={x - 11} y="342" width="22" height="35" fill="#c80808" /></g>
                ))}
                {[788, 816, 926].map(x => <rect key={x} x={x - 8} y="350" width="16" height="25" stroke="#0a6a0a" strokeWidth="4" />)}
                <path d="M636 310H930" stroke="#d90f9c" strokeWidth="5" strokeDasharray="18 14" />
                <path d="M636 342H930" stroke="#d01818" strokeWidth="5" />
                <path d="M636 357H930" stroke="#666" strokeWidth="4" strokeDasharray="16 14" />
                <polyline points="640,318 677,300 705,327 735,318 775,345 818,357 844,300 870,325 930,352" stroke="#4a90e8" strokeWidth="5" />
              </g>
              <SideLabel x="217" y="85">12.01</SideLabel>
            </svg>
          </SidePanel>
          <SidePanel $h={59}>
            <Picker>大单净量</Picker>
          </SidePanel>
        </aside>
      </Trading>

      <Band />
      <Sections>
        {['看点', '资讯', '盘口', '资金', '简况(F10)', '诊股', '财务'].map((t, i) => (
          <SectionLink key={t} href={`#s${i}`} $on={i === 1}>{t}</SectionLink>
        ))}
      </Sections>

      <Dock>
        <DockRow>
          <IndexBox>
            <Tri d="up" w={16} h={9} c="#b5b5b5" />
            <strong>2199.88</strong>
            <IndexLine><em>创业</em>−0.25%</IndexLine>
          </IndexBox>
          <DockItem href="#order">
            <svg {...dockIcon}><path d="M4 1.500h20.500L33 10v22.500H4zM24 2v8.500h9M11 17h15M11 24.500h15" /></svg>
            下单
          </DockItem>
          <DockItem href="#community">
            <svg {...dockIcon}>
              <path d="M20 32.500A15 15.500 0 1 1 35 17v15.500z" />
              <path d="M11 1A17 17 0 0 0 11 33" />
              <path d="M20.500 9l2.700 5.300 5.800 1-4.200 4.100 1 5.900-5.300-2.800-5.300 2.800 1-5.900L12 15.300l5.800-1z" />
            </svg>
            社区
          </DockItem>
          <DockItem href="#remove">
            <svg {...dockIcon}><rect x="2" y="2" width="33" height="30" rx="1" /><path d="M10.500 17h16" /></svg>
            删自选
          </DockItem>
          <DockItem href="#more">
            <svg {...dockIcon}><circle cx="18.500" cy="17" r="15.500" /><path d="M13 11.500h11M13 17h11M13 22h11" /></svg>
            功能
          </DockItem>
        </DockRow>
        <HomeBar />
      </Dock>
    </Page>
  );
}
